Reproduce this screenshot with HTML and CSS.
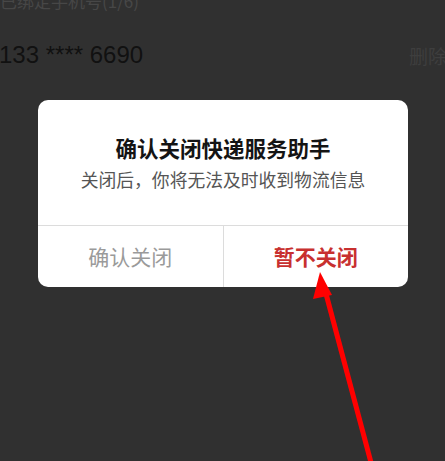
FILE: index.html
```html
<!DOCTYPE html>
<html lang="zh">
<head>
<meta charset="utf-8">
<link rel="stylesheet" href="styles.css">
</head>
<body>
<div class="page">
  <div class="section-title">已绑定手机号(1/6)</div>
  <div class="phone-row">
    <span class="phone">133 **** 6690</span>
    <span class="delete">删除</span>
  </div>
</div>
<div class="dialog">
  <div class="dialog-body">
    <div class="dialog-title">确认关闭快递服务助手</div>
    <div class="dialog-desc">关闭后，你将无法及时收到物流信息</div>
  </div>
  <div class="dialog-actions">
    <div class="btn btn-confirm">确认关闭</div>
    <div class="btn btn-cancel">暂不关闭</div>
  </div>
</div>
<svg class="arrow" width="445" height="461" viewBox="0 0 445 461">
  <line x1="373" y1="470" x2="325" y2="290" stroke="#ff0000" stroke-width="5"/>
  <polygon points="320,272 332,295 313,299" fill="#ff0000"/>
</svg>
</body>
</html>
```
FILE: styles.css
```css
html, body {
  margin: 0;
  padding: 0;
}
body {
  width: 445px;
  height: 461px;
  background: #303030;
  overflow: hidden;
  position: relative;
  font-family: "Noto Sans CJK SC", "Noto Sans", sans-serif;
}
.page {
  display: flex;
  flex-direction: column;
}
.section-title {
  font-size: 17px;
  line-height: 17px;
  color: #474747;
  margin-top: -8px;
  height: 17px;
  white-space: nowrap;
}
.phone-row {
  display: flex;
  justify-content: space-between;
  align-items: center;
  margin-top: 29px;
  height: 34px;
}
.phone {
  font-family: "Liberation Sans", Arial, sans-serif;
  font-size: 24px;
  color: #111111;
  margin-left: -1px;
}
.delete {
  font-size: 19px;
  color: #3e3e3e;
  margin-right: -2px;
  white-space: nowrap;
}
.dialog {
  position: absolute;
  left: 38px;
  top: 100px;
  width: 370px;
  height: 187px;
  background: #ffffff;
  border-radius: 10px;
  display: flex;
  flex-direction: column;
  overflow: hidden;
}
.dialog-body {
  height: 126px;
  display: flex;
  flex-direction: column;
  align-items: center;
  padding-top: 33px;
  box-sizing: border-box;
  border-bottom: 1px solid #dcdcdc;
}
.dialog-title {
  font-size: 21.5px;
  font-weight: bold;
  color: #141414;
  line-height: 30px;
}
.dialog-desc {
  font-size: 17.8px;
  color: #555555;
  line-height: 24px;
  margin-top: 4px;
}
.dialog-actions {
  flex: 1;
  display: flex;
}
.btn {
  flex: 1;
  display: flex;
  align-items: center;
  justify-content: center;
  font-size: 21px;
  padding-bottom: 2px;
}
.btn-confirm {
  color: #9a9a9a;
  border-right: 1px solid #dcdcdc;
}
.btn-cancel {
  color: #c8302f;
  font-weight: bold;
}
.arrow {
  position: absolute;
  left: 0;
  top: 0;
}
```
